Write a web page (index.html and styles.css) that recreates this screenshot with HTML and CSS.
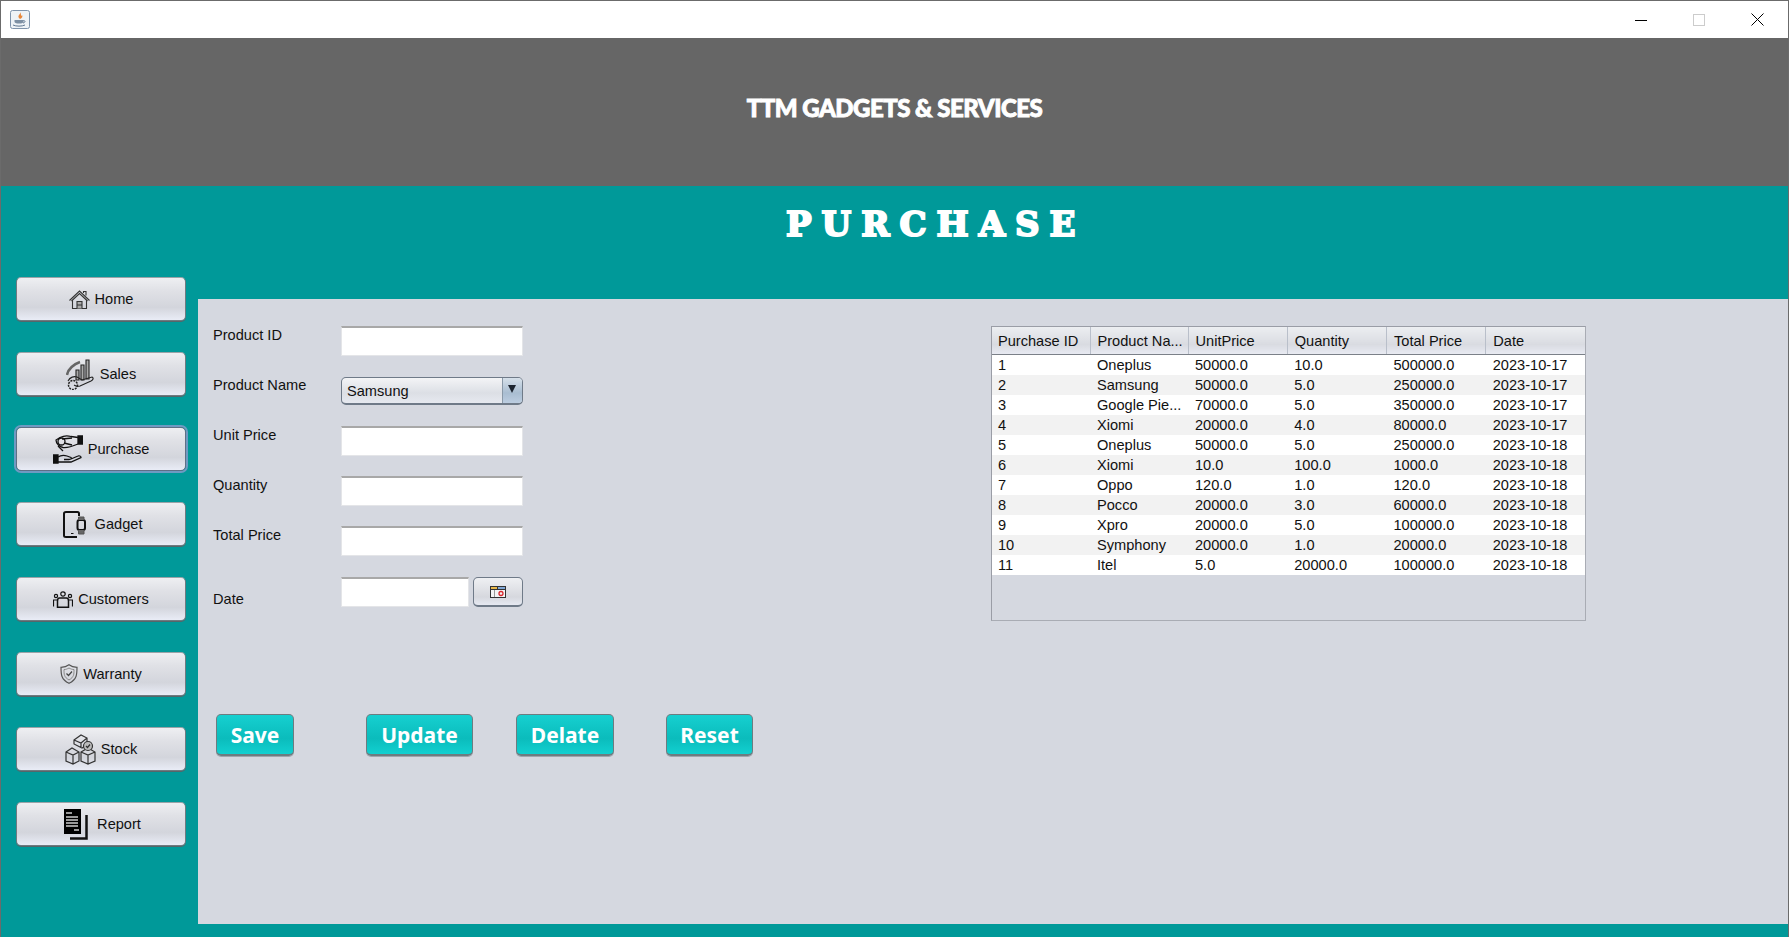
FILE: index.html
```html
<!DOCTYPE html>
<html lang="en">
<head>
    <meta charset="UTF-8">
    <title>TTM Gadgets &amp; Services</title>
    <link rel="stylesheet" href="styles.css">
</head>
<body>
<div class="window">

    <div class="titlebar">
        <svg class="java-icon" width="20" height="20" viewBox="0 0 20 20">
            <rect x="0.5" y="0.5" width="19" height="18" rx="2" fill="#eef2f6" stroke="#7f93ab"/>
            <path d="M10 2c1 2-2 3-1.500 5 .3 1 1 1.500 1.500 2 2-1 3-2.500 2-4-.5 1-1 1-1 .5 0-1 0-2-1-3.500z" fill="#e8873a"/>
            <path d="M4.500 10h9v1.500c0 1.500-1.500 2-4.500 2s-4.500-.5-4.500-2z" fill="#7d8fa3"/>
            <path d="M13.500 10.500c2 0 2 2-.5 2.500M3 15c3 1.500 9 1.500 12 0" fill="none" stroke="#5f7690" stroke-width="1"/>
        </svg>
        <div class="window-controls">
            <svg width="12" height="12" viewBox="0 0 12 12"><path d="M0 6.500h12" stroke="#000" stroke-width="1"/></svg>
            <svg width="12" height="12" viewBox="0 0 12 12"><rect x="0.500" y="0.500" width="11" height="11" fill="none" stroke="#ccc"/></svg>
            <svg width="13" height="13" viewBox="0 0 13 13"><path d="M.5.500l12 12M12.500.500l-12 12" stroke="#000" stroke-width="1"/></svg>
        </div>
    </div>

    <header class="brand-bar">TTM GADGETS &amp; SERVICES</header>

    <div class="workspace">
        <nav class="sidebar">
            <button class="nav-button">
                <svg width="21" height="19" viewBox="0 0 21 19" fill="none" stroke="#333" stroke-width="1.100">
                    <path d="M.5 10.500L10.500 1l10 9.500M2.500 11l8-7.500 8 7.500M3.500 10v8.500h14V10M14.500 3V1.500h2.500v4"/>
                    <path d="M8 18.500v-7h5v7M8 15h5" fill="#aaa"/>
                </svg>
                Home
            </button>
            <button class="nav-button">
                <svg class="icon-gap-s" width="28" height="31" viewBox="0 0 28 31" fill="none" stroke="#222" stroke-width="1.100">
                    <path d="M1 16C2 10 8 5 14 3" stroke-width="2.500" stroke="#666"/>
                    <path d="M10 11h3v10h-3zM15 6h3v15h-3zM20 1h3v19h-3z" fill="#aaa"/>
                    <path d="M2 22c2-4 6-5 9-4l5 3 10-3c2 1 1 3-1 4l-11 5c-3 1-4 0-6-1"/>
                    <circle cx="7" cy="26" r="4.500" stroke-dasharray="2 1" stroke-width="1.500"/>
                </svg>
                Sales
            </button>
            <button class="nav-button is-focused">
                <svg width="30" height="30" viewBox="0 0 30 30" fill="none" stroke="#111" stroke-width="1.300">
                    <path d="M25 2h4.500v8H25z" fill="#111"/>
                    <path d="M25 3.500l-7-1c-3-1-7-1-11 1L3 6c0 4 4 7 7 7.500 4 .5 9-1 15-3.500"/>
                    <circle cx="8.500" cy="7.500" r="3.500"/>
                    <path d="M9 5l10-1M11 9l8 2M5 12l5 5" />
                    <path d="M.5 21H5v8H.5z" fill="#111"/>
                    <path d="M5 23c3-2 6-2 9-1l4 1.500c1 1 0 2-2 2h-5M5 28h13l10-4.500c0-1.500-2-2-3-1.500l-7 3"/>
                </svg>
                Purchase
            </button>
            <button class="nav-button">
                <svg class="icon-gap-l" width="23" height="27" viewBox="0 0 23 27" fill="none" stroke="#111">
                    <path d="M16 5V2.500C16 1.500 15.500 1 14.500 1H3C2 1 1 1.500 1 2.500v22C1 25.500 2 26 3 26h11" stroke-width="2"/>
                    <path d="M8 22.500h2.500" stroke-width="1"/>
                    <rect x="14.500" y="9" width="7.500" height="10" rx="2" stroke-width="2"/>
                    <path d="M15.500 9V6h5.500v3M15.500 19v4h5.500v-4" fill="#666" stroke="#555"/>
                </svg>
                Gadget
            </button>
            <button class="nav-button">
                <svg width="20" height="17" viewBox="0 0 20 17" fill="none" stroke="#111" stroke-width="1.200">
                    <circle cx="10" cy="3" r="2.200"/>
                    <circle cx="3" cy="5" r="1.600"/>
                    <circle cx="17" cy="5" r="1.600"/>
                    <path d="M.5 15.500V9h3.500M19.500 15.500V9H16"/>
                    <path d="M4.500 16.300V10c0-2 1-3 2-3h7c1 0 2 1 2 3v6.300z" stroke-width="1.500"/>
                </svg>
                Customers
            </button>
            <button class="nav-button">
                <svg width="18" height="20" viewBox="0 0 18 20" fill="none" stroke="#555">
                    <path d="M9 .8c2.500 2 5 2.500 8 2.500 0 7 0 12-8 16-8-4-8-9-8-16 3 0 5.500-.5 8-2.500z" stroke-width="1.200"/>
                    <path d="M9 4c2 1 3 1.500 5 1.500 0 5 0 7.500-5 10.500-5-3-5-5.500-5-10.500C6 5.500 7 5 9 4z" stroke="#888"/>
                    <path d="M6.500 9.500L8.500 11.500 12 7.500" stroke="#444" stroke-width="1.200"/>
                </svg>
                Warranty
            </button>
            <button class="nav-button">
                <svg width="31" height="31" viewBox="0 0 31 31" fill="none" stroke="#333" stroke-width="1.200">
                    <path d="M9 6l7-5 6 3v7l-5 3-8-4zM9 6l7 3 6-5M16 9v5"/>
                    <path d="M1 18l6-4 7 4v9l-6 3-7-3zM1 18l7 3 6-3M8 21v9"/>
                    <path d="M16 18l7-4 7 4v9l-7 3-7-3zM16 18l7 3 7-3M23 21v9"/>
                    <circle cx="23" cy="12" r="4.500" fill="#bbb"/>
                    <path d="M21 12l1.500 1.500 2.500-3"/>
                </svg>
                Stock
            </button>
            <button class="nav-button">
                <svg class="icon-gap-l" width="24" height="31" viewBox="0 0 24 31">
                    <path d="M22.500 6v23.500H6" fill="none" stroke="#111" stroke-width="2.500"/>
                    <path d="M0 0h17v25H0z" fill="#000"/>
                    <path d="M2 4h6M2 8h12M2 11h12M2 14h12M2 17h12M10 21h5" stroke="#ccc" stroke-width="1.500"/>
                </svg>
                Report
            </button>
        </nav>

        <main class="main-area">
            <h1 class="page-title">PURCHASE</h1>

            <section class="panel">
                <div class="form-column">
                    <div class="form-row">
                        <label>Product ID</label>
                        <input class="text-input" type="text">
                    </div>
                    <div class="form-row">
                        <label>Product Name</label>
                        <div class="combo">
                            <span class="combo-value">Samsung</span>
                            <span class="combo-arrow"></span>
                        </div>
                    </div>
                    <div class="form-row">
                        <label>Unit Price</label>
                        <input class="text-input" type="text">
                    </div>
                    <div class="form-row">
                        <label>Quantity</label>
                        <input class="text-input" type="text">
                    </div>
                    <div class="form-row">
                        <label>Total Price</label>
                        <input class="text-input" type="text">
                    </div>
                    <div class="form-row date-row">
                        <label>Date</label>
                        <input class="text-input date-input" type="text">
                        <button class="date-button">
                            <svg width="16" height="12" viewBox="0 0 16 12">
                                <rect x="0" y="0" width="16" height="12" fill="#333"/>
                                <rect x="1" y="1" width="6" height="2" fill="#e8b84a"/>
                                <rect x="8" y="1" width="7" height="2" fill="#7fa6d6"/>
                                <rect x="1" y="4" width="14" height="7" fill="#f4f4f4"/>
                                <rect x="4" y="4" width="1" height="7" fill="#999"/>
                                <circle cx="11" cy="7.500" r="2" fill="none" stroke="#d8262c" stroke-width="1.300"/>
                            </svg>
                        </button>
                    </div>

                    <div class="action-row">
                        <button class="action-button save-button">Save</button>
                        <button class="action-button update-button">Update</button>
                        <button class="action-button delate-button">Delate</button>
                        <button class="action-button reset-button">Reset</button>
                    </div>
                </div>

                <div class="table-box">
                    <table class="data-table">
                        <thead>
                            <tr>
                                <th>Purchase ID</th>
                                <th>Product Na...</th>
                                <th>UnitPrice</th>
                                <th>Quantity</th>
                                <th>Total Price</th>
                                <th>Date</th>
                            </tr>
                        </thead>
                        <tbody>
                            <tr><td>1</td><td>Oneplus</td><td>50000.0</td><td>10.0</td><td>500000.0</td><td>2023-10-17</td></tr>
                            <tr><td>2</td><td>Samsung</td><td>50000.0</td><td>5.0</td><td>250000.0</td><td>2023-10-17</td></tr>
                            <tr><td>3</td><td>Google Pie...</td><td>70000.0</td><td>5.0</td><td>350000.0</td><td>2023-10-17</td></tr>
                            <tr><td>4</td><td>Xiomi</td><td>20000.0</td><td>4.0</td><td>80000.0</td><td>2023-10-17</td></tr>
                            <tr><td>5</td><td>Oneplus</td><td>50000.0</td><td>5.0</td><td>250000.0</td><td>2023-10-18</td></tr>
                            <tr><td>6</td><td>Xiomi</td><td>10.0</td><td>100.0</td><td>1000.0</td><td>2023-10-18</td></tr>
                            <tr><td>7</td><td>Oppo</td><td>120.0</td><td>1.0</td><td>120.0</td><td>2023-10-18</td></tr>
                            <tr><td>8</td><td>Pocco</td><td>20000.0</td><td>3.0</td><td>60000.0</td><td>2023-10-18</td></tr>
                            <tr><td>9</td><td>Xpro</td><td>20000.0</td><td>5.0</td><td>100000.0</td><td>2023-10-18</td></tr>
                            <tr><td>10</td><td>Symphony</td><td>20000.0</td><td>1.0</td><td>20000.0</td><td>2023-10-18</td></tr>
                            <tr><td>11</td><td>Itel</td><td>5.0</td><td>20000.0</td><td>100000.0</td><td>2023-10-18</td></tr>
                        </tbody>
                    </table>
                </div>
            </section>
        </main>
    </div>
</div>
</body>
</html>
```

FILE: styles.css
```css
html, body {
    margin: 0;
    padding: 0;
}
body {
    font-family: "Liberation Sans", Arial, sans-serif;
    font-size: 14.6px;
    color: #111;
}
.window {
    display: flex;
    flex-direction: column;
    width: 1789px;
    height: 937px;
    box-sizing: border-box;
    border: 1px solid #6b6b6b;
    border-bottom: none;
    background-color: #009999;
    overflow: hidden;
}

/* title bar */
.titlebar {
    display: flex;
    align-items: center;
    justify-content: space-between;
    height: 37px;
    flex-shrink: 0;
    padding-left: 9px;
    background-color: white;
}
.window-controls {
    display: flex;
    align-items: center;
    gap: 46px;
    padding-right: 24px;
}

.brand-bar {
    height: 148px;
    flex-shrink: 0;
    box-sizing: border-box;
    padding-top: 55px;
    background-color: #666666;
    color: white;
    font-family: "Lato", sans-serif;
    font-size: 24px;
    line-height: 30px;
    font-weight: 900;
    letter-spacing: -0.5px;
    text-align: center;
    -webkit-text-stroke: 0.9px white;
}

.workspace {
    display: flex;
    flex: 1;
    min-height: 0;
}

/* left menu */
.sidebar {
    display: flex;
    flex-direction: column;
    gap: 31px;
    width: 197px;
    flex-shrink: 0;
    box-sizing: border-box;
    padding: 91px 12px 0 15px;
}
.nav-button {
    display: flex;
    align-items: center;
    justify-content: center;
    gap: 5px;
    height: 44px;
    flex-shrink: 0;
    padding: 0;
    border: 1px solid #6f7a80;
    border-top-color: #9aa3a8;
    border-radius: 5px;
    background: linear-gradient(#eeeff2 0%, #e0e1e6 30%, #d3d5dc 70%, #e9ecf6 100%);
    box-shadow: 0 1px 0 #55666a;
    font-family: "Liberation Sans", Arial, sans-serif;
    font-size: 14.6px;
    color: #111;
}
.icon-gap-s {
    margin-right: 1px;
}
.icon-gap-l {
    margin-left: 3px;
    margin-right: 4px;
}
.is-focused {
    border-color: #5f6f85;
    box-shadow: 0 0 0 2px #6f9ac2;
}

/* page heading and content */
.main-area {
    display: flex;
    flex-direction: column;
    flex: 1;
    min-width: 0;
    padding-bottom: 13px;
}
.page-title {
    height: 113px;
    flex-shrink: 0;
    box-sizing: border-box;
    margin: 0;
    padding: 17px 0 0 588px;
    color: white;
    font-family: "DejaVu Serif", serif;
    font-size: 34px;
    line-height: 42px;
    font-weight: bold;
    letter-spacing: 10px;
    -webkit-text-stroke: 2px white;
}
.panel {
    display: flex;
    flex: 1;
    align-items: flex-start;
    gap: 278px;
    padding: 27px 0 0 15px;
    background-color: #d5d8e0;
}

/* form */
.form-column {
    width: 500px;
    flex-shrink: 0;
}
.form-row {
    display: flex;
    align-items: flex-start;
    height: 50px;
}
.form-row label {
    width: 128px;
    flex-shrink: 0;
    padding-top: 1px;
    line-height: 17px;
}
.text-input {
    width: 182px;
    height: 30px;
    box-sizing: border-box;
    border: 1px solid #e4e5e8;
    border-top: 2px solid #a8a8a8;
    background-color: white;
    padding: 0;
    outline: none;
}
.combo {
    display: flex;
    width: 182px;
    height: 28px;
    box-sizing: border-box;
    margin-top: 1px;
    border: 1px solid #6f7a88;
    border-bottom-width: 2px;
    border-radius: 5px;
    overflow: hidden;
    background: linear-gradient(#f3f4f6, #dcdfe5 60%, #e6e9f0);
}
.combo-value {
    flex: 1;
    padding: 5px 0 0 5px;
    line-height: 17px;
}
.combo-arrow {
    position: relative;
    width: 19px;
    background: linear-gradient(#d6e0ea, #a9bdd1 60%, #bccde0);
    border-left: 1px solid #8a99a8;
}
.combo-arrow::after {
    content: "";
    position: absolute;
    left: 5px;
    top: 7px;
    border-left: 4px solid transparent;
    border-right: 4px solid transparent;
    border-top: 8px solid #1c2430;
}
.date-row {
    height: auto;
    margin-top: 1px;
}
.date-row label {
    padding-top: 14px;
}
.date-input {
    width: 128px;
}
.date-button {
    display: flex;
    align-items: center;
    justify-content: center;
    width: 50px;
    height: 30px;
    margin-left: 4px;
    padding: 0;
    border: 1px solid #6f7a88;
    border-bottom-width: 2px;
    border-radius: 5px;
    background: linear-gradient(#eff0f3, #d6d8de 70%, #e6e9f2);
}
.action-row {
    display: flex;
    margin-top: 106px;
    padding-left: 3px;
}
.action-button {
    height: 42px;
    flex-shrink: 0;
    padding: 0;
    border: 1px solid #6d7c80;
    border-bottom-width: 2px;
    border-radius: 5px;
    background: linear-gradient(#16d0d0, #0bbcbc 60%, #12d0d0);
    box-shadow: 0 1px 0 #a0a4ac;
    color: white;
    font-family: "Noto Sans", sans-serif;
    font-size: 21px;
    font-weight: bold;
}
.save-button {
    width: 78px;
    margin-right: 72px;
}
.update-button {
    width: 107px;
    margin-right: 43px;
}
.delate-button {
    width: 98px;
    margin-right: 52px;
}
.reset-button {
    width: 87px;
}

/* table */
.table-box {
    width: 595px;
    height: 295px;
    flex-shrink: 0;
    box-sizing: border-box;
    border: 1px solid #9a9da6;
    border-right-color: #a9acb4;
    border-bottom-color: #a9acb4;
}
.data-table {
    width: 593px;
    table-layout: fixed;
    border-collapse: collapse;
}
.data-table th {
    height: 27px;
    box-sizing: border-box;
    padding: 1px 0 0 7px;
    border-right: 1px solid #b9bfca;
    border-bottom: 1px solid #7b8088;
    background: linear-gradient(#eceef1, #d9dbe1 65%, #e8eaf2);
    font-weight: normal;
    text-align: left;
    white-space: nowrap;
    overflow: hidden;
}
.data-table th:nth-child(1), .data-table th:nth-child(2) {
    width: 98px;
}
.data-table th:first-child, .data-table td:first-child {
    padding-left: 6px;
}
.data-table th:last-child {
    border-right: none;
}
.data-table td {
    height: 20px;
    box-sizing: border-box;
    padding: 0 0 0 7px;
    background-color: white;
    line-height: 20px;
    white-space: nowrap;
    overflow: hidden;
}
.data-table tbody tr:nth-child(even) td {
    background-color: #f2f2f2;
}
```
